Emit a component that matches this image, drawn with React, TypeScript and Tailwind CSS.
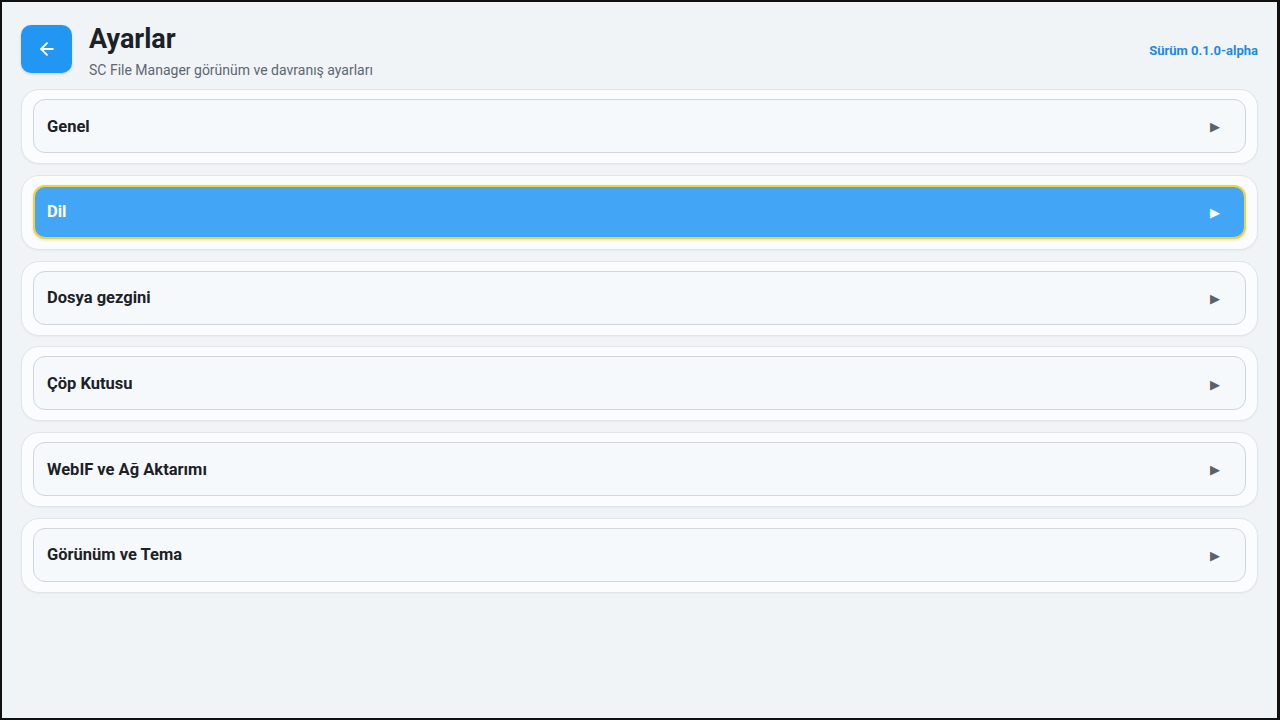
import { ArrowLeft } from 'lucide-react';

const sections = [
  'Genel',
  'Dil',
  'Dosya gezgini',
  'Çöp Kutusu',
  'WebIF ve Ağ Aktarımı',
  'Görünüm ve Tema',
];

function SectionRow({ title, active }: { title: string; active: boolean }) {
  return (
    <div className="rounded-[18px] border border-[#e1e5e8] bg-[#fbfcfd] px-[11px] pt-[9px] pb-[10px] shadow-[0_1px_2px_rgba(0,0,0,0.04)]">
      <div
        className={
          active
            ? 'flex h-[54px] items-center justify-between rounded-[12px] border-2 border-[#f2d23c] bg-[#42a5f5] pt-[2px] pl-[12px] pr-[24px] text-white shadow-[0_1px_3px_rgba(0,0,0,0.12)]'
            : 'flex h-[54px] items-center justify-between rounded-[12px] border border-[#cfd5da] bg-[#f6f9fb] pt-[2px] pl-[13px] pr-[25px] text-[#1b2127]'
        }
      >
        <span className="text-[16.5px] font-bold">{title}</span>
        <span className={active ? 'text-[13px] text-white' : 'text-[13px] text-[#5a6168]'}>▶</span>
      </div>
    </div>
  );
}

export default function App() {
  return (
    <div
      className="h-[720px] w-[1280px] overflow-hidden border-t-2 border-r-[3px] border-b-2 border-l-2 border-[#111] bg-[#f0f4f7]"
      style={{ fontFamily: 'Roboto, "Noto Sans", sans-serif' }}
    >
      <div className="px-[19px] pt-[23px]">
        <header className="flex items-start justify-between">
          <div className="flex items-start gap-[17px]">
            <button className="flex h-[48px] w-[51px] items-center justify-center rounded-[10px] bg-[#2196f3] text-white shadow-[0_1px_3px_rgba(0,0,0,0.15)]">
              <ArrowLeft size={20} strokeWidth={2.2} />
            </button>
            <div className="flex flex-col">
              <h1 className="mt-[-2px] text-[27px] font-bold leading-[32px] text-[#1b2127]">Ayarlar</h1>
              <p className="mt-[7px] text-[14px] leading-[16px] text-[#5d676f]">
                SC File Manager görünüm ve davranış ayarları
              </p>
            </div>
          </div>
          <span className="mt-[16px] text-[13px] font-bold text-[#1e88e5]">Sürüm 0.1.0-alpha</span>
        </header>

        <div className="mt-[11px] flex flex-col gap-[10.75px]">
          {sections.map((s) => (
            <SectionRow key={s} title={s} active={s === 'Dil'} />
          ))}
        </div>
      </div>
    </div>
  );
}
